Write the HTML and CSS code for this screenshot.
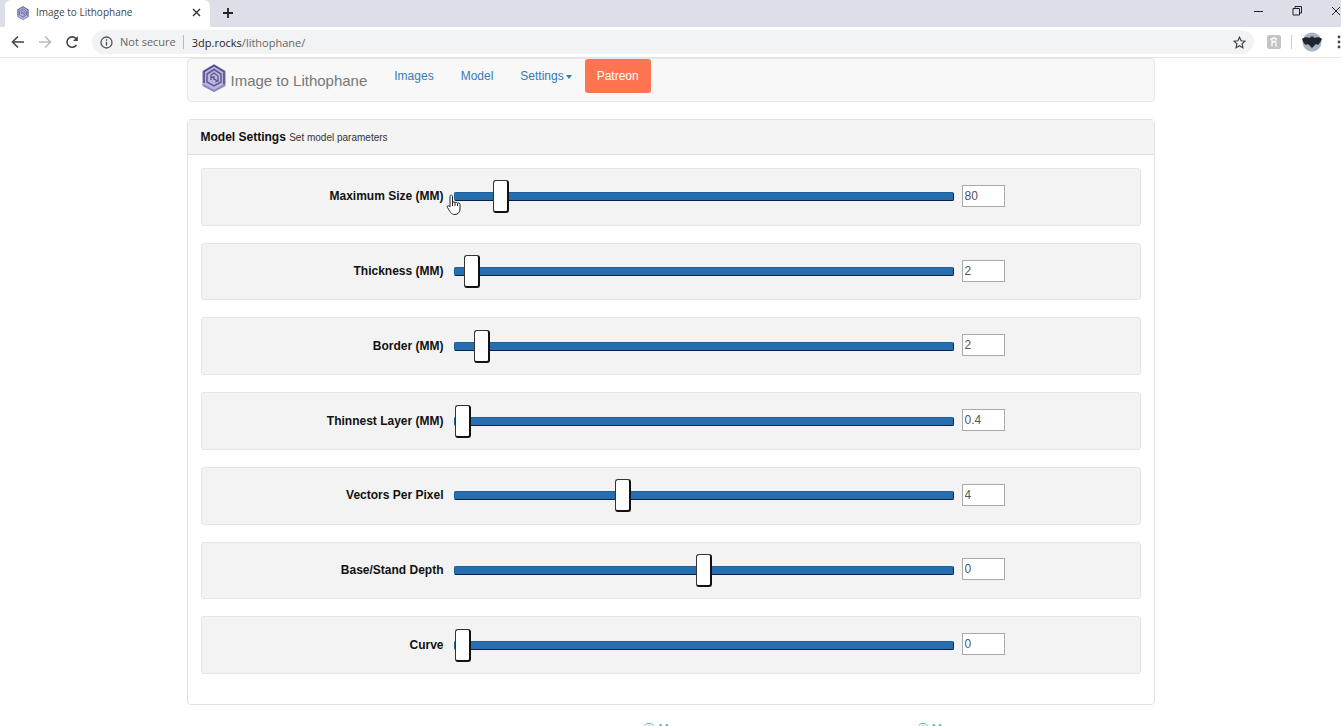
FILE: index.html
```html
<!DOCTYPE html>
<html lang="en">
<head>
<meta charset="utf-8">
<title>Image to Lithophane</title>
<link rel="stylesheet" href="styles.css">
</head>
<body>
<svg class="defs" aria-hidden="true">
  <symbol id="logo" viewBox="0 0 24 28">
    <path fill="#b9b8dc" d="M12 0 24 7v14l-12 7L0 21V7z"/>
    <path fill="none" stroke="#4d4a86" stroke-width="1.6" d="M2 19V7.500L12 1.500l10 6v13"/>
    <path fill="none" stroke="#8c89c2" stroke-width="2" d="M1 21 12 27l11-6"/>
    <path fill="none" stroke="#5d5a97" stroke-width="1.500" d="M5 18v-8l7-4.500 7 4.500v8l-7 4z"/>
    <path fill="none" stroke="#5d5a97" stroke-width="1.300" d="M9 16v-5l3-2 4 3v5l-3 1M9 12l6 5M12 12v4"/>
  </symbol>
</svg>

<header class="browser">
  <div class="tabstrip">
    <div class="tab">
      <svg class="tab-icon"><use href="#logo"/></svg>
      <span class="tab-title">Image to Lithophane</span>
      <button class="icon-button" aria-label="Close tab"><svg width="9" height="9" viewBox="0 0 9 9"><path d="M1 1l7 7M8 1 1 8" stroke="#333" stroke-width="1.400"/></svg></button>
    </div>
    <button class="icon-button new-tab" aria-label="New tab"><svg width="12" height="12" viewBox="0 0 12 12"><path d="M6 1v10M1 6h10" stroke="#222" stroke-width="1.800"/></svg></button>
    <div class="window-buttons">
      <button class="icon-button" aria-label="Minimize"><svg width="10" height="10" viewBox="0 0 10 10"><path d="M1 5.500h9" stroke="#222"/></svg></button>
      <button class="icon-button" aria-label="Restore"><svg width="10" height="10" viewBox="0 0 10 10"><path d="M1 2.500h6.500V9H1zM3 2.500v-2h6.500V7h-2" fill="none" stroke="#222"/></svg></button>
      <button class="icon-button" aria-label="Close"><svg width="10" height="10" viewBox="0 0 10 10"><path d="M1 1l8 8M9 1 1 9" stroke="#222"/></svg></button>
    </div>
  </div>
  <div class="toolbar">
    <button class="icon-button" aria-label="Back"><svg width="14" height="14" viewBox="0 0 14 14"><path d="M13 7H2M7 1.500 1.500 7 7 12.500" fill="none" stroke="#444" stroke-width="1.600"/></svg></button>
    <button class="icon-button" aria-label="Forward"><svg width="14" height="14" viewBox="0 0 14 14"><path d="M1 7h11M7 1.500 12.500 7 7 12.500" fill="none" stroke="#bbb" stroke-width="1.600"/></svg></button>
    <button class="icon-button" aria-label="Reload"><svg width="14" height="14" viewBox="0 0 14 14"><path d="M11.500 10A5.200 5.200 0 1 1 11 3.500l1 1.200" fill="none" stroke="#444" stroke-width="1.600"/><path d="M12.800 1v5H8z" fill="#444"/></svg></button>
    <div class="address">
      <svg width="13" height="13" viewBox="0 0 13 13"><circle cx="6.500" cy="6.500" r="5.500" fill="none" stroke="#555" stroke-width="1.300"/><path d="M6.500 5.800v4M6.500 3.200v1.500" stroke="#555" stroke-width="1.300"/></svg>
      <span class="security">Not secure</span>
      <span class="url">3dp.rocks<span class="path">/lithophane/</span></span>
      <button class="icon-button star" aria-label="Bookmark"><svg width="13" height="13" viewBox="0 0 13 13"><path d="m6.500 1.200 1.600 3.600 3.900.4-2.900 2.600.8 3.900-3.400-2-3.400 2 .8-3.900L1 5.200l3.900-.4z" fill="none" stroke="#444" stroke-width="1.200"/></svg></button>
    </div>
    <div class="extensions">
      <svg width="14" height="14" viewBox="0 0 14 14"><rect width="14" height="14" rx="2" fill="#c4c4c4"/><path d="M5 11.500V3.500M5 8c1-2 4-2 4 0v3.500M3.500 4.500 6 3l3 .5v2" fill="none" stroke="#fff" stroke-width="1.300"/></svg>
      <span class="separator"></span>
      <svg width="20" height="20" viewBox="0 0 20 20"><circle cx="10" cy="10" r="9.500" fill="#a7b4c6"/><path fill="#20242b" d="M0 7c2-2 5-2 8-1l1-2 1 1 1-1 1 2c3-1 6-1 8 1-1 2-2 4-4 6l-2-1-2 2-2 2-2-2-2-2-2 1C2 12 1 10 0 7z"/></svg>
      <button class="icon-button menu" aria-label="Menu"><svg width="4" height="14" viewBox="0 0 4 14"><g fill="#444"><circle cx="2" cy="2" r="1.400"/><circle cx="2" cy="7" r="1.400"/><circle cx="2" cy="12" r="1.400"/></g></svg></button>
    </div>
  </div>
</header>

<main class="container">
  <nav class="navbar">
    <a class="brand" href="#"><svg class="brand-icon"><use href="#logo"/></svg><span>Image to Lithophane</span></a>
    <a class="nav-link" href="#">Images</a>
    <a class="nav-link" href="#">Model</a>
    <a class="nav-link" href="#">Settings<span class="caret"></span></a>
    <a class="patreon" href="#">Patreon</a>
  </nav>

  <section class="panel">
    <h1 class="panel-heading">Model Settings <small>Set model parameters</small></h1>
    <form class="settings">
      <div class="setting">
        <label for="size">Maximum Size (MM)</label>
        <div class="slider-wrap">
          <input class="slider" id="size" type="range" min="0" max="1000" value="80">
          <svg class="pointer" width="16" height="22" viewBox="0 0 16 22"><path d="M4 13V2.500C4 .5 6.500.5 6.500 2.500V9c0-1.500 2.500-1.500 2.500 0 0-1 2.500-1 2.500.5 0-1 2.500-1 2.500 1V15c0 3-2 5.500-5 5.500-4 0-5-3-7.500-7C.5 11.500 2.500 11 4 13z" fill="#fff" stroke="#222"/><path d="M6.500 9v3M9 9v3M11.500 10v2" stroke="#222"/></svg>
        </div>
        <input class="value" type="number" aria-label="Maximum Size value" value="80">
      </div>
      <div class="setting">
        <label for="thickness">Thickness (MM)</label>
        <input class="slider" id="thickness" type="range" min="0" max="100" value="2">
        <input class="value" type="number" aria-label="Thickness value" value="2">
      </div>
      <div class="setting">
        <label for="border">Border (MM)</label>
        <input class="slider" id="border" type="range" min="0" max="50" value="2">
        <input class="value" type="number" aria-label="Border value" value="2">
      </div>
      <div class="setting">
        <label for="thinnest">Thinnest Layer (MM)</label>
        <input class="slider" id="thinnest" type="range" min="0.3" max="50" step="0.1" value="0.4">
        <input class="value" type="number" aria-label="Thinnest Layer value" step="0.1" value="0.4">
      </div>
      <div class="setting">
        <label for="vectors">Vectors Per Pixel</label>
        <input class="slider" id="vectors" type="range" min="1" max="10" value="4">
        <input class="value" type="number" aria-label="Vectors Per Pixel value" value="4">
      </div>
      <div class="setting">
        <label for="base">Base/Stand Depth</label>
        <input class="slider" id="base" type="range" min="-50" max="50" value="0">
        <input class="value" type="number" aria-label="Base/Stand Depth value" value="0">
      </div>
      <div class="setting">
        <label for="curve">Curve</label>
        <input class="slider" id="curve" type="range" min="0" max="360" value="0">
        <input class="value" type="number" aria-label="Curve value" value="0">
      </div>
    </form>
  </section>

  <footer class="credits">
    <a href="#">ⓘ M</a>
    <a href="#">ⓘ M</a>
  </footer>
</main>
</body>
</html>
```
FILE: styles.css
```css
* { box-sizing: border-box; }

body {
  margin: 0;
  height: 100vh;
  overflow: hidden;
  background: #fff;
  color: #111;
  font: 12px/17px "Liberation Sans", Arial, sans-serif;
}

a { text-decoration: none; }
.defs { display: none; }

.icon-button {
  display: flex;
  padding: 0;
  border: 0;
  background: none;
}

/* Browser window */
.browser {
  font-family: "Open Sans", "Noto Sans", sans-serif;
  border-bottom: 1px solid #e2e3e5;
}

.tabstrip {
  display: flex;
  align-items: center;
  height: 27px;
  padding-left: 5px;
  background: #dcdfe7;
}

.tab {
  display: flex;
  align-items: center;
  gap: 6px;
  width: 205px;
  height: 27px;
  padding: 0 9px 2px 11px;
  background: #fff;
  border-radius: 6px 6px 0 0;
  font-size: 10px;
  color: #444;
}

.tab-icon { width: 14px; height: 14px; }
.tab-title { flex: 1; }
.new-tab { margin: 0 auto 2px 12px; }

.window-buttons {
  display: flex;
  gap: 29px;
  padding-bottom: 6px;
}

.toolbar {
  display: flex;
  align-items: center;
  gap: 13px;
  height: 30px;
  padding-left: 11px;
}

.address {
  display: flex;
  flex: 1;
  align-items: center;
  height: 24px;
  padding: 0 8px;
  border-radius: 12px;
  background: #f1f3f4;
  font-size: 11px;
  color: #222;
}

.security {
  margin-left: 7px;
  padding-right: 7px;
  border-right: 1px solid #b8babd;
  line-height: 14px;
  color: #666;
}

.url { margin-left: 8px; }
.path { color: #666; }
.star { margin-left: auto; }

.extensions {
  display: flex;
  align-items: center;
  gap: 10px;
}

.separator { width: 1px; height: 14px; background: #ccc; }
.menu { margin-left: 5px; }

/* Page */
.container {
  max-width: 968px;
  margin: 0 auto;
}

.navbar {
  display: flex;
  align-items: flex-start;
  height: 44px;
  margin-bottom: 17px;
  padding-left: 14px;
  border: 1px solid #e7e7e7;
  border-radius: 4px;
  background: #f8f8f8;
}

.brand {
  display: flex;
  align-items: center;
  gap: 5px;
  margin-right: 14px;
  padding-top: 5px;
  font-size: 15px;
  color: #777;
}

.brand span { padding-top: 4px; }
.brand-icon { width: 24px; height: 28px; }

.nav-link {
  padding: 9px 13px;
  color: #337ab7;
}

.nav-link + .nav-link { margin-left: 1px; }

.caret {
  display: inline-block;
  margin-left: 2px;
  border: 3px solid transparent;
  border-top: 4px solid #337ab7;
  border-bottom: 0;
  vertical-align: middle;
}

.patreon {
  padding: 9px 12px 8px;
  border-radius: 3px;
  background: #ff7450;
  color: #fff;
}

.panel {
  border: 1px solid #e2e2e2;
  border-radius: 4px;
}

.panel-heading {
  margin: 0;
  padding: 9px 13px 8px;
  border-bottom: 1px solid #ddd;
  background: #f4f4f4;
  font-size: 12px;
  line-height: 17px;
}

.panel-heading small {
  font-size: 10px;
  font-weight: 400;
  color: #333;
}

.settings {
  display: flex;
  flex-direction: column;
  gap: 17px;
  height: 549px;
  padding: 13px 13px 30px;
}

.setting {
  display: grid;
  flex: 1;
  grid-template-columns: 1fr 500px 43px 127px;
  column-gap: 8px;
  align-items: center;
  border: 1px solid #e5e5e5;
  border-radius: 3px;
  background: #f3f3f3;
}

.setting label {
  padding-right: 2px;
  font-weight: 700;
  text-align: right;
}

.slider-wrap {
  display: flex;
  position: relative;
}

.slider {
  width: 100%;
  height: 32px;
  margin: 0;
  appearance: none;
  background: none;
}

.slider::-webkit-slider-runnable-track {
  height: 9px;
  border: 1px solid #1f609a;
  border-right-color: #0d1e4a;
  border-bottom-color: #0d1e4a;
  border-radius: 2px;
  background: #276eae;
}

.slider::-webkit-slider-thumb {
  width: 16px;
  height: 33px;
  margin-top: -13px;
  appearance: none;
  border: 1px solid #333;
  border-right: 2px solid #111;
  border-bottom: 2px solid #111;
  border-radius: 3px;
  background: #fff;
}

.pointer {
  position: absolute;
  top: 13px;
  left: -8px;
}

.value {
  width: 43px;
  height: 22px;
  margin-bottom: 2px;
  padding: 1px 2px;
  border: 1px solid #aaa;
  background: #fff;
  color: #555;
  font: inherit;
  appearance: textfield;
}

.value::-webkit-inner-spin-button { display: none; }

.credits {
  display: flex;
  gap: 248px;
  justify-content: center;
  padding: 16px 0 0 244px;
}

.credits a { color: #3bb0d0; }
```
